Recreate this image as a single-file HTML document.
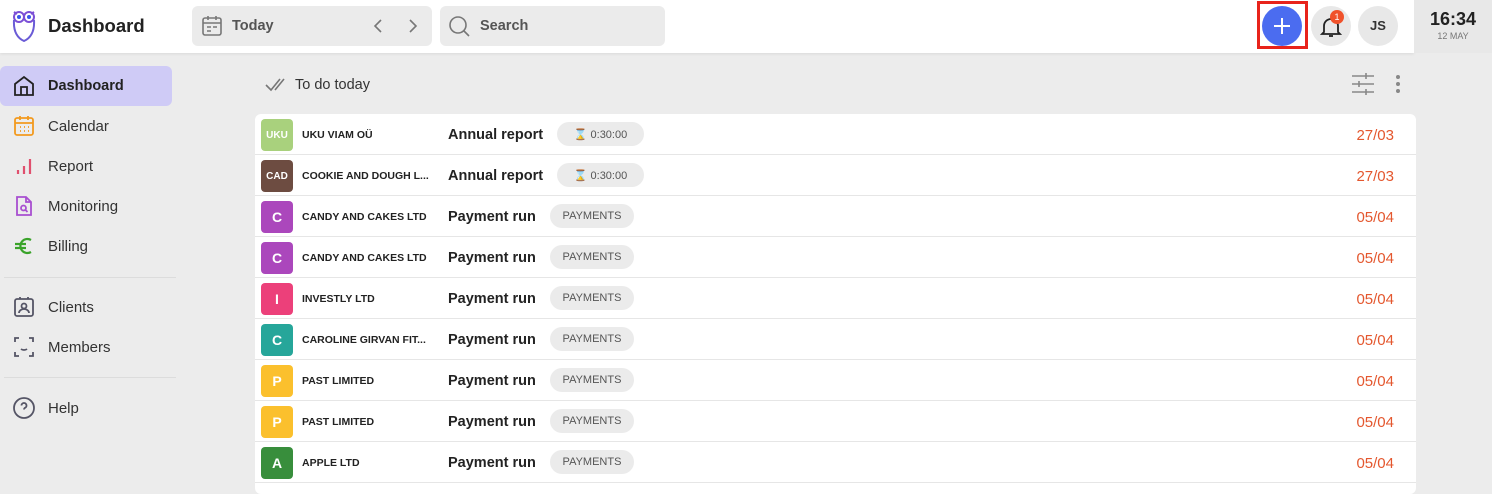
<!DOCTYPE html>
<html><head><meta charset="utf-8"><style>
*{box-sizing:border-box;margin:0;padding:0}
body{width:1492px;height:484px;overflow:hidden;background:#ececec;font-family:"Liberation Sans",Arial,sans-serif;color:#222;position:relative}
.hdr{position:absolute;left:0;top:0;width:1414px;height:53px;background:#fff;box-shadow:0 1px 3px rgba(0,0,0,.08)}
.clock{position:absolute;left:1414px;top:0;width:78px;height:53px;background:#e8e8e8;text-align:center}
.abs{position:absolute}
.pill{background:#ebebeb;border-radius:6px}
.nav{position:absolute;left:0;width:172px;height:40px;display:flex;align-items:center;font-size:15px;color:#333}
.nav svg{position:absolute;left:12px}
.nav span{position:absolute;left:48px;top:12px}
.sep{position:absolute;left:4px;width:172px;height:1px;background:#dcdcdc}
.card{position:absolute;left:255px;top:114px;width:1161px;height:380px;background:#fff;border-radius:6px}
.row{position:absolute;left:0;width:1161px;height:41px;border-bottom:1px solid #e6e6e6}
.av{position:absolute;left:6px;top:5px;width:32px;height:32px;border-radius:4px;color:#fff;font-weight:bold;font-size:14px;display:flex;align-items:center;justify-content:center}
.cl{position:absolute;left:47px;top:15px;font-size:10.5px;font-weight:bold;color:#222}
.tk{position:absolute;left:193px;top:13px;font-size:14.5px;font-weight:bold;color:#222}
.tag{position:absolute;top:8px;height:24px;border-radius:12px;background:#ebebeb;font-size:11px;color:#555;display:flex;align-items:center;justify-content:center}
.dt{position:absolute;right:22px;top:13px;font-size:15px;color:#e4572e}
</style></head><body>
<div class="hdr"></div>
<svg class="abs" style="left:12px;top:10px" width="24" height="32" viewBox="0 0 24 32"><circle cx="7" cy="7" r="5" fill="none" stroke="#7b4fd6" stroke-width="2"/><circle cx="17" cy="7" r="5" fill="none" stroke="#7b4fd6" stroke-width="2"/><circle cx="7" cy="7" r="2" fill="#3a57e8"/><circle cx="17" cy="7" r="2" fill="#3a57e8"/><path d="M2 10 Q1 26 12 31 Q23 26 22 10" fill="none" stroke="#6a5bd6" stroke-width="2"/><path d="M2 2 L5 4 M22 2 L19 4" stroke="#7b4fd6" stroke-width="2"/></svg>
<div class="abs" style="left:48px;top:15px;font-size:18.5px;font-weight:bold;color:#222">Dashboard</div>
<div class="abs pill" style="left:192px;top:6px;width:240px;height:40px"></div>
<svg class="abs" style="left:201px;top:15px" width="22" height="22" viewBox="0 0 22 22" fill="none" stroke="#777" stroke-width="1.6"><rect x="2" y="3" width="18" height="17" rx="2"/><path d="M2 8h18M7 1v4M15 1v4M6 12h4M12 12h4M6 16h4"/></svg>
<div class="abs" style="left:232px;top:18px;font-size:14.5px;font-weight:bold;color:#555">Today</div>
<svg class="abs" style="left:372px;top:18px" width="50" height="16" viewBox="0 0 50 16" fill="none" stroke="#777" stroke-width="1.6"><path d="M9 2L3 8l6 6M38 2l6 6-6 6"/></svg>
<div class="abs pill" style="left:440px;top:6px;width:225px;height:40px"></div>
<svg class="abs" style="left:448px;top:15px" width="24" height="24" viewBox="0 0 24 24" fill="none" stroke="#777" stroke-width="1.6"><circle cx="10" cy="10" r="8"/><path d="M16 16l5 5"/></svg>
<div class="abs" style="left:480px;top:18px;font-size:14.5px;font-weight:bold;color:#555">Search</div>
<div class="abs" style="left:1257px;top:1px;width:51px;height:48px;border:3px solid #e8231b"></div>
<div class="abs" style="left:1262px;top:6px;width:40px;height:40px;border-radius:50%;background:#4b6cf0"></div>
<svg class="abs" style="left:1272px;top:16px" width="20" height="20" viewBox="0 0 20 20" stroke="#fff" stroke-width="2"><path d="M10 2v16M2 10h16"/></svg>
<div class="abs" style="left:1311px;top:6px;width:40px;height:40px;border-radius:50%;background:#e8e8e8"></div>
<svg class="abs" style="left:1320px;top:15px" width="22" height="24" viewBox="0 0 22 24" fill="none" stroke="#222" stroke-width="1.8"><path d="M4 17V11a7 7 0 0 1 14 0v6l2 2H2z"/><path d="M9 21h4"/></svg>
<div class="abs" style="left:1330px;top:10px;width:14px;height:14px;border-radius:50%;background:#f0522b;color:#fff;font-size:9px;text-align:center;line-height:14px">1</div>
<div class="abs" style="left:1358px;top:6px;width:40px;height:40px;border-radius:50%;background:#e8e8e8;font-size:13px;font-weight:bold;color:#333;text-align:center;line-height:40px">JS</div>
<div class="clock"><div style="margin-top:9px;font-size:18px;font-weight:bold;color:#222">16:34</div><div style="font-size:9px;color:#777;margin-top:1px">12 MAY</div></div>

<div class="abs" style="left:0;top:66px;width:172px;height:40px;background:#cfcbf6;border-radius:6px"></div>
<div class="nav" style="top:66px"><svg width="24" height="24" viewBox="0 0 24 24" fill="none" stroke="#222" stroke-width="1.8"><path d="M3 10l9-7 9 7v11H3z"/><path d="M9 21v-8h6v8"/></svg><span style="font-weight:bold;color:#222;font-size:14.5px">Dashboard</span></div>
<div class="nav" style="top:106px"><svg width="24" height="24" viewBox="0 0 24 24" fill="none" stroke="#f29a1f" stroke-width="1.8"><rect x="3" y="4" width="18" height="17" rx="2"/><path d="M3 9h18M8 2v4M16 2v4M8 13h1M12 13h1M16 13h1M8 17h1M12 17h1M16 17h1"/></svg><span>Calendar</span></div>
<div class="nav" style="top:146px"><svg width="24" height="24" viewBox="0 0 24 24" fill="none" stroke="#e0506e" stroke-width="2.2"><path d="M6 20v-4M12 20v-8M18 20V5"/></svg><span>Report</span></div>
<div class="nav" style="top:186px"><svg width="24" height="24" viewBox="0 0 24 24" fill="none" stroke="#a84fd0" stroke-width="1.8"><path d="M5 3h9l5 5v13H5z"/><path d="M14 3v5h5"/><circle cx="11.5" cy="14" r="2.5"/><path d="M13.5 16l2 2"/></svg><span>Monitoring</span></div>
<div class="nav" style="top:226px"><svg width="24" height="24" viewBox="0 0 24 24" fill="none" stroke="#3aa32a" stroke-width="2.2"><path d="M19 6a7 7 0 1 0 0 12"/><path d="M3 10h11M3 14h11"/></svg><span>Billing</span></div>
<div class="sep" style="top:277px"></div>
<div class="nav" style="top:287px"><svg width="24" height="24" viewBox="0 0 24 24" fill="none" stroke="#556" stroke-width="1.8"><rect x="3" y="4" width="18" height="17" rx="2"/><circle cx="12" cy="11" r="2.5"/><path d="M7 18a5 4 0 0 1 10 0M8 2v2M16 2v2"/></svg><span>Clients</span></div>
<div class="nav" style="top:327px"><svg width="24" height="24" viewBox="0 0 24 24" fill="none" stroke="#556" stroke-width="1.8"><path d="M3 7V3h4M17 3h4v4M21 17v4h-4M7 21H3v-4M9 14a4 3 0 0 0 6 0"/><path d="M9 10h0M15 10h0"/></svg><span>Members</span></div>
<div class="sep" style="top:377px"></div>
<div class="nav" style="top:388px"><svg width="24" height="24" viewBox="0 0 24 24" fill="none" stroke="#556" stroke-width="1.8"><circle cx="12" cy="12" r="10"/><path d="M9.5 9.5a2.5 2.5 0 1 1 3.5 2.3c-.7.4-1 1-1 1.7M12 17h0"/></svg><span>Help</span></div>

<svg class="abs" style="left:264px;top:77px" width="26" height="16" viewBox="0 0 26 16" fill="none" stroke="#777" stroke-width="1.6"><path d="M2 8l5 5 9-11M11 13l9-11"/></svg>
<div class="abs" style="left:295px;top:77px;font-size:14.5px;color:#333">To do today</div>
<svg class="abs" style="left:1351px;top:73px" width="24" height="22" viewBox="0 0 24 22" stroke="#888" stroke-width="1.6"><path d="M1 3h22M1 11h22M1 19h22M15 0v6M8 8v6M15 16v6" fill="none"/></svg>
<svg class="abs" style="left:1394px;top:74px" width="8" height="20" viewBox="0 0 8 20" fill="#888"><circle cx="4" cy="3" r="2"/><circle cx="4" cy="10" r="2"/><circle cx="4" cy="17" r="2"/></svg>

<div class="card">
<div class="row" style="top:0"><div class="av" style="background:#a9d17d;font-size:10px">UKU</div><div class="cl">UKU VIAM OÜ</div><div class="tk">Annual report</div><div class="tag" style="left:302px;width:87px">⌛&nbsp;0:30:00</div><div class="dt">27/03</div></div>
<div class="row" style="top:41px"><div class="av" style="background:#6d4c41;font-size:10px">CAD</div><div class="cl">COOKIE AND DOUGH L...</div><div class="tk">Annual report</div><div class="tag" style="left:302px;width:87px">⌛&nbsp;0:30:00</div><div class="dt">27/03</div></div>
<div class="row" style="top:82px"><div class="av" style="background:#ab47bc">C</div><div class="cl">CANDY AND CAKES LTD</div><div class="tk">Payment run</div><div class="tag" style="left:295px;width:84px">PAYMENTS</div><div class="dt">05/04</div></div>
<div class="row" style="top:123px"><div class="av" style="background:#ab47bc">C</div><div class="cl">CANDY AND CAKES LTD</div><div class="tk">Payment run</div><div class="tag" style="left:295px;width:84px">PAYMENTS</div><div class="dt">05/04</div></div>
<div class="row" style="top:164px"><div class="av" style="background:#ec407a">I</div><div class="cl">INVESTLY LTD</div><div class="tk">Payment run</div><div class="tag" style="left:295px;width:84px">PAYMENTS</div><div class="dt">05/04</div></div>
<div class="row" style="top:205px"><div class="av" style="background:#26a69a">C</div><div class="cl">CAROLINE GIRVAN FIT...</div><div class="tk">Payment run</div><div class="tag" style="left:295px;width:84px">PAYMENTS</div><div class="dt">05/04</div></div>
<div class="row" style="top:246px"><div class="av" style="background:#fbc02d">P</div><div class="cl">PAST LIMITED</div><div class="tk">Payment run</div><div class="tag" style="left:295px;width:84px">PAYMENTS</div><div class="dt">05/04</div></div>
<div class="row" style="top:287px"><div class="av" style="background:#fbc02d">P</div><div class="cl">PAST LIMITED</div><div class="tk">Payment run</div><div class="tag" style="left:295px;width:84px">PAYMENTS</div><div class="dt">05/04</div></div>
<div class="row" style="top:328px"><div class="av" style="background:#388e3c">A</div><div class="cl">APPLE LTD</div><div class="tk">Payment run</div><div class="tag" style="left:295px;width:84px">PAYMENTS</div><div class="dt">05/04</div></div>
</div>
</body></html>
